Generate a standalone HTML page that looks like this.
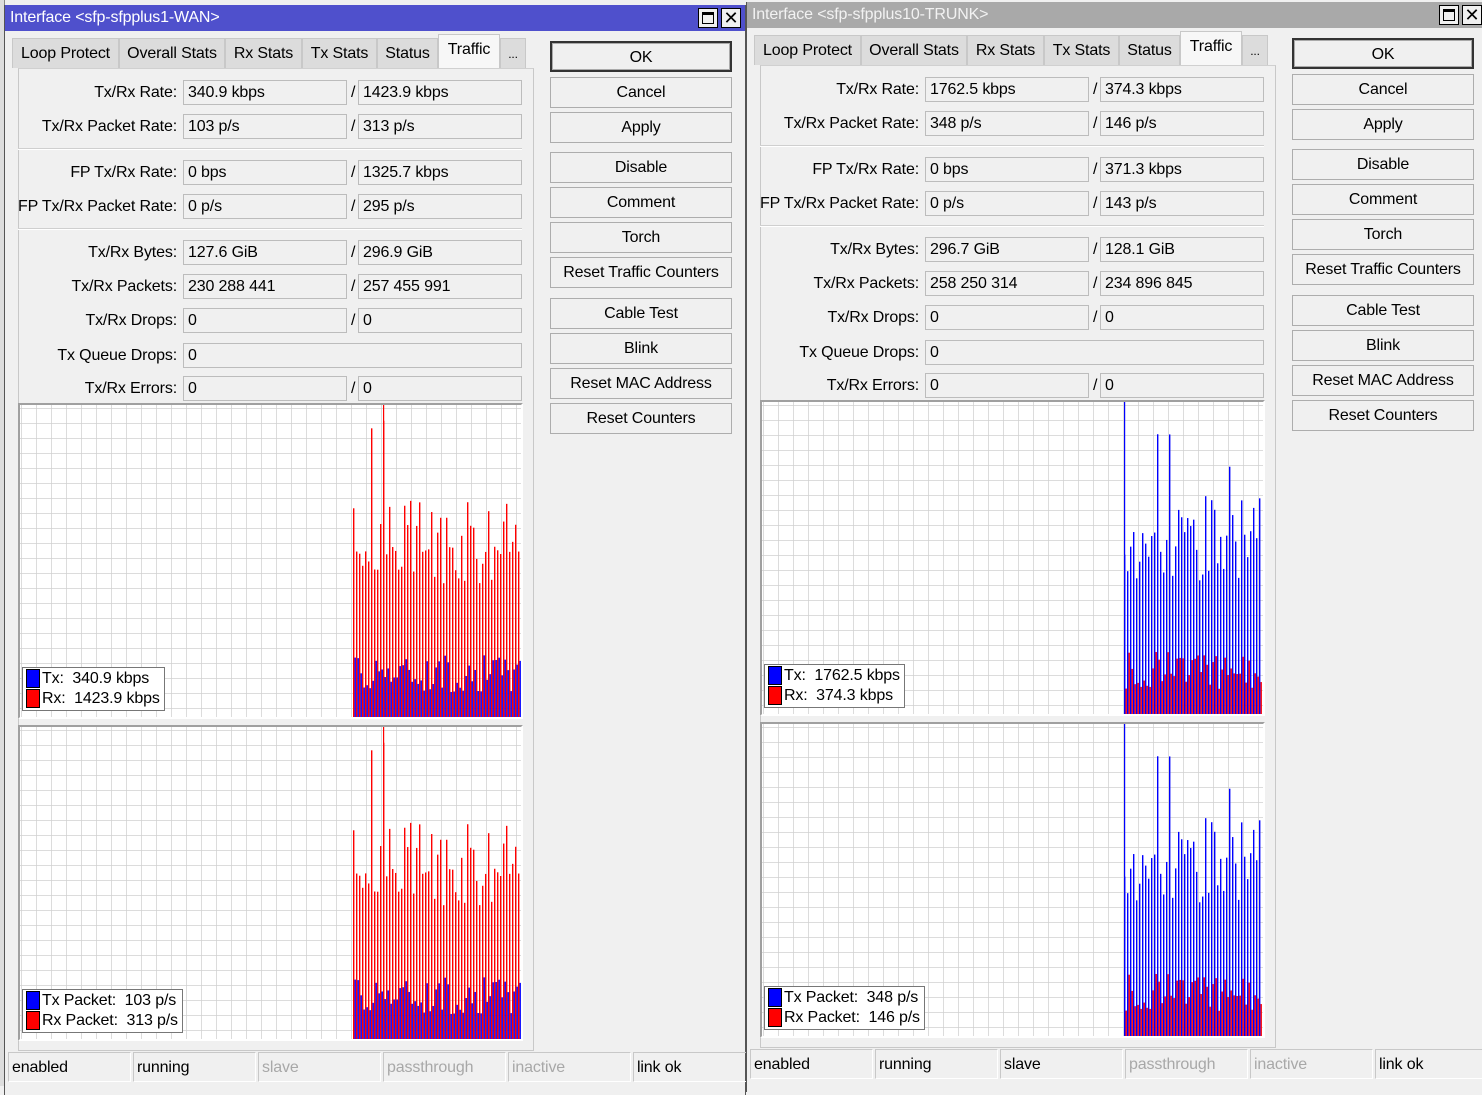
<!DOCTYPE html>
<html><head><meta charset="utf-8">
<style>
*{box-sizing:border-box;margin:0;padding:0}
body{width:1482px;height:1086px;overflow:hidden;background:#f0f0f0;font-family:"Liberation Sans",sans-serif;font-size:16px;color:#000;position:relative;letter-spacing:-0.15px}
.win{position:absolute;width:742px;height:1090px;background:#f0f0f0;border-left:1px solid #555;border-right:1px solid #555}
.title{position:absolute;left:0;top:0;width:100%;height:26px;color:#fff;font-size:16px;line-height:26px;padding-left:5px}
.tab{position:absolute;top:33px;height:30px;background:#dcdcdc;border:1px solid #c8c8c8;border-bottom:none;line-height:30px;text-align:center}
.tab.act{top:29px;height:35px;background:#f7f7f7;line-height:30px}
.panel{position:absolute;left:13px;top:63px;width:516px;height:983px;border:1px solid #c8c8c8;border-top:1px solid #d0d0d0}
.lbl{position:absolute;width:172px;text-align:right;height:25px;line-height:25px}
.box{position:absolute;height:25px;border:1px solid #bcbcbc;background:#f0f0f0;line-height:23px;padding-left:4px}
.sl{position:absolute;line-height:25px}
.sep{position:absolute;left:13px;width:504px;height:2px;border-top:1px solid #cfcfcf;border-bottom:1px solid #fff}
.btn{position:absolute;left:545px;width:182px;height:31px;border:1px solid #adadad;background:#f0f0f0;text-align:center;line-height:29px}
.btn.ok{border:2px solid #333;box-shadow:inset 0 0 0 1px #aaa}
.gr{position:absolute;left:13px;width:505px;height:316px;border:2px solid #a0a0a0;border-right-color:#fff;border-bottom-color:#fff;background:#fff}
.leg{position:absolute;background:#fff;border:1px solid #777;padding:1px 4px 1px 3px;line-height:20px;font-size:16px}
.sw{display:inline-block;width:14px;height:19px;vertical-align:top;border:1px solid #000;margin-right:2px}
.st{position:absolute;top:1047px;height:30px;border:1px solid #c8c8c8;border-right-color:#fff;border-bottom-color:#fff;line-height:30px;padding-left:3px}
.dis{color:#a8a8a8}
.cb{position:absolute;top:3px;width:20px;height:20px;border:1px solid #000;background:#f0f0f0}
</style></head><body>

<div style="position:absolute;left:0;top:0;width:5px;height:1086px;background:#ddd;border-right:1px solid #888"></div>

<div class="win" id="w1" style="left:4px;top:5px;">
<div class="title" style="background:#4f50cc">Interface &lt;sfp-sfpplus1-WAN&gt;</div>
<div class="cb" style="left:693px"><div style="position:absolute;left:3px;top:3px;width:12px;height:12px;border:1px solid #000;border-top-width:3px"></div></div>
<div class="cb" style="left:716px;text-align:center;line-height:18px;font-size:18px">✕</div>
<div class="tab" style="left:7px;width:107px">Loop Protect</div>
<div class="tab" style="left:114px;width:106px">Overall Stats</div>
<div class="tab" style="left:220px;width:77px">Rx Stats</div>
<div class="tab" style="left:297px;width:75px">Tx Stats</div>
<div class="tab" style="left:372px;width:61px">Status</div>
<div class="tab act" style="left:433px;width:62px">Traffic</div>
<div class="tab" style="left:495px;width:26px;font-size:12px">...</div>
<div class="panel"></div>
</div>

<div class="win" id="w2" style="left:746px;top:2px;width:740px">
<div class="title" style="background:#a9a9a9;color:#f2f2f2">Interface &lt;sfp-sfpplus10-TRUNK&gt;</div>
<div class="cb" style="left:692px"><div style="position:absolute;left:3px;top:3px;width:12px;height:12px;border:1px solid #000;border-top-width:3px"></div></div>
<div class="cb" style="left:715px;text-align:center;line-height:18px;font-size:18px">✕</div>
<div class="tab" style="left:7px;width:107px">Loop Protect</div>
<div class="tab" style="left:114px;width:106px">Overall Stats</div>
<div class="tab" style="left:220px;width:77px">Rx Stats</div>
<div class="tab" style="left:297px;width:75px">Tx Stats</div>
<div class="tab" style="left:372px;width:61px">Status</div>
<div class="tab act" style="left:433px;width:62px">Traffic</div>
<div class="tab" style="left:495px;width:26px;font-size:12px">...</div>
<div class="panel"></div>
</div>

<script>
function fill(id,vals,legs,bx,mode,seed,spike,slaveDis){
 var w=document.getElementById(id),h='';
 var labels=['Tx/Rx Rate:','Tx/Rx Packet Rate:','FP Tx/Rx Rate:','FP Tx/Rx Packet Rate:','Tx/Rx Bytes:','Tx/Rx Packets:','Tx/Rx Drops:','Tx Queue Drops:','Tx/Rx Errors:'];
 var ys=[87,121,167,201,247,281,315,350,383];
 for(var i=0;i<9;i++){var t=ys[i]-12;
  h+='<div class="lbl" style="left:0;top:'+t+'px">'+labels[i]+'</div>';
  if(i==7){h+='<div class="box" style="left:178px;top:'+t+'px;width:339px">'+vals[i][0]+'</div>';}
  else{h+='<div class="box" style="left:178px;top:'+t+'px;width:164px">'+vals[i][0]+'</div><div class="sl" style="left:346px;top:'+t+'px">/</div><div class="box" style="left:353px;top:'+t+'px;width:164px">'+vals[i][1]+'</div>';}
 }
 h+='<div class="sep" style="top:143px"></div><div class="sep" style="top:223px"></div>';
 var bt=['OK','Cancel','Apply','Disable','Comment','Torch','Reset Traffic Counters','Cable Test','Blink','Reset MAC Address','Reset Counters'];
 var bts=[36,72,107,147,182,217,252,293,328,363,398];
 for(i=0;i<11;i++)h+='<div class="btn'+(i==0?' ok':'')+'" style="top:'+bts[i]+'px">'+bt[i]+'</div>';
 var s=seed;function r(){s=(s*9301+49297)%233280;return s/233280;}
 [398,720].forEach(function(gy,gi){
  var svg='<svg width="501" height="312" style="position:absolute;left:0;top:0"><defs><pattern id="p'+id+gi+'" width="15" height="15" patternUnits="userSpaceOnUse" x="1" y="3"><path d="M0 0H15M0 0V15" stroke="#d0d0d0" stroke-width="1.5" fill="none"/></pattern></defs><rect width="501" height="312" fill="url(#p'+id+gi+')"/>';
  var ss=s;
  for(var x=bx;x<500;x+=3){
   var big=0.42+r()*0.28, sm=0.08+r()*0.12;
   if(r()<0.06)big=0.75+r()*0.2;
   var hb=big*312, hs=sm*312;
   var c1=mode==0?'#f00':'#00f', c2=mode==0?'#00f':'#f00';
   svg+='<rect x="'+x+'" y="'+(312-hb)+'" width="1.4" height="'+hb+'" fill="'+c1+'"/><rect x="'+(x+1.5)+'" y="'+(312-hs)+'" width="1.4" height="'+hs+'" fill="'+c2+'"/>';
  }
  svg+='<rect x="'+spike+'" y="0" width="1.2" height="312" fill="'+(mode==0?'#f00':'#00f')+'"/></svg>';
  s=ss;
  var L=legs[gi];
  h+='<div class="gr" style="top:'+gy+'px">'+svg+'<div class="leg" style="left:2px;top:262px"><div><span class="sw" style="background:#00f"></span>'+L[0]+'</div><div><span class="sw" style="background:#f00"></span>'+L[1]+'</div></div></div>';
 });
 var st=[['enabled',0],['running',0],['slave',slaveDis],['passthrough',1],['inactive',1],['link ok',0]];
 for(i=0;i<6;i++)h+='<div class="st'+(st[i][1]?' dis':'')+'" style="left:'+(3+i*125)+'px;width:123px">'+st[i][0]+'</div>';
 w.insertAdjacentHTML('beforeend',h);
}
</script>
<script>
fill('w1',[['340.9 kbps','1423.9 kbps'],['103 p/s','313 p/s'],['0 bps','1325.7 kbps'],['0 p/s','295 p/s'],['127.6 GiB','296.9 GiB'],['230 288 441','257 455 991'],['0','0'],['0',''],['0','0']],[['Tx:&nbsp; 340.9 kbps','Rx:&nbsp; 1423.9 kbps'],['Tx Packet:&nbsp; 103 p/s','Rx Packet:&nbsp; 313 p/s']],333,0,17,363,1);
fill('w2',[['1762.5 kbps','374.3 kbps'],['348 p/s','146 p/s'],['0 bps','371.3 kbps'],['0 p/s','143 p/s'],['296.7 GiB','128.1 GiB'],['258 250 314','234 896 845'],['0','0'],['0',''],['0','0']],[['Tx:&nbsp; 1762.5 kbps','Rx:&nbsp; 374.3 kbps'],['Tx Packet:&nbsp; 348 p/s','Rx Packet:&nbsp; 146 p/s']],362,1,53,362,0);
</script>
</body></html>
